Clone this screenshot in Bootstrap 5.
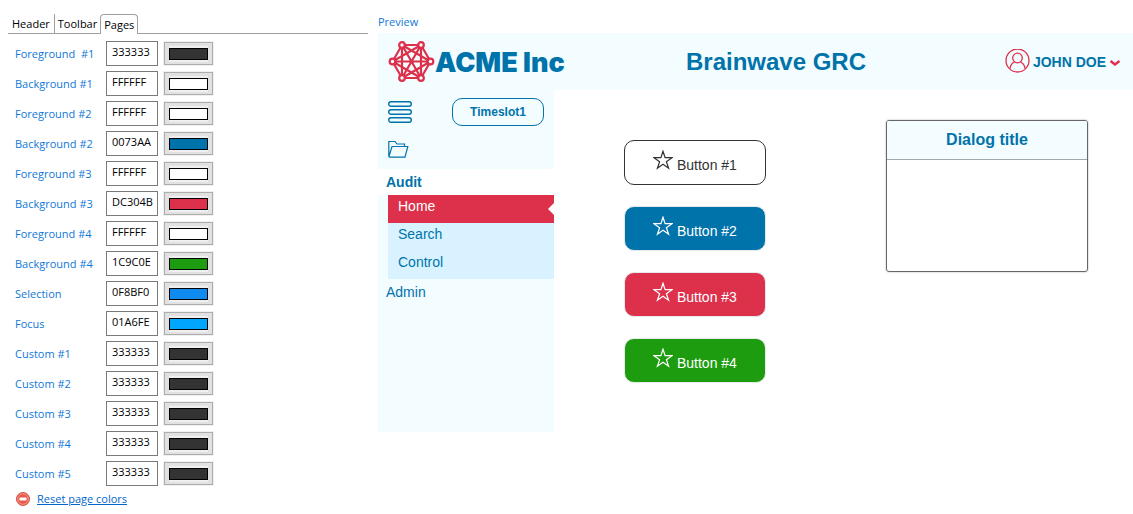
<!DOCTYPE html>
<html lang="en">
<head>
<meta charset="utf-8">
<meta name="viewport" content="width=device-width, initial-scale=1">
<title>Theme colors</title>
<link href="https://cdn.jsdelivr.net/npm/bootstrap@5.3.0/dist/css/bootstrap.min.css" rel="stylesheet">
<style>
  :root { --brand: #0073aa; --accent: #dc304b; --tint: #f3fcff; --label: #0f78d8; }
  body { font-family: "Open Sans", "Noto Sans", sans-serif; font-size: 11px; line-height: 16px; color: #000; background: #fff; }
  .layout { padding: 14px 0 0 8px; gap: 10px; }
  .settings { width: 360px; }
  .page-tabs { border-bottom: 1px solid #a0a0a0; height: 20px; }
  .page-tabs .nav-link { font-size: 11px; line-height: 16px; height: 19px; color: #000; padding: 2px 4px 0; border: 0; border-radius: 0; }
  .page-tabs .nav-item + .nav-item .nav-link { border-left: 1px solid #a0a0a0; padding: 2px 3px 0; }
  .page-tabs .nav-item .nav-link.active { height: 20px; background: #fff; border: 1px solid #a0a0a0; border-bottom: 0; border-radius: 4px 4px 0 0; }
  .color-list { gap: 5px; padding: 7px 0 0 7px; }
  .color-row { height: 25px; }
  .color-row label { width: 91px; color: var(--label); white-space: pre; }
  .hex-box { width: 52px; height: 25px; padding: 0 0 4px 5px; border: 1px solid #7a7a7a; border-radius: 0; font-size: 11px; line-height: 16px; color: #000; background: #fff; }
  .swatch-btn { width: 49px; height: 23px; margin-left: 6px; padding: 0; border: 1px solid #adadad; outline: 1px solid #f0f0f0; background: #e1e1e1; }
  .swatch-btn span { width: 39px; height: 16px; padding: 2px 0; background: #f0f0f0; }
  .swatch-btn i { height: 12px; border: 1px solid #000; }
  .reset-row { padding: 5px 0 0 8px; gap: 7px; }
  .reset-link { color: #0066cc; }
  .preview { font-family: "Liberation Sans", Arial, sans-serif; font-size: 14px; color: var(--brand); }
  .preview-label { font-family: "Open Sans", "Noto Sans", sans-serif; font-size: 11px; line-height: 16px; padding-bottom: 3px; color: var(--label); }
  .app-header { background: var(--tint); height: 57px; }
  .app-logo { flex: 0 0 190px; padding-left: 10px; }
  .app-name { font-family: Inter, "Liberation Sans", sans-serif; font-weight: 900; font-size: 27px; line-height: 32px; padding-top: 2px; }
  .app-title { font-size: 24px; line-height: 32px; font-weight: 700; }
  .app-user { flex: 0 0 149px; padding: 0 12px 0 0; border: 0; background: none; color: var(--brand); font-size: 14px; font-weight: 700; gap: 3px; }
  .side { width: 176px; height: 342px; background: var(--tint); }
  .side-tools { height: 79px; padding: 8px 10px; }
  .icon-btn { padding: 0; border: 0; background: none; display: flex; }
  .timeslot { width: 92px; height: 28px; border: 1px solid var(--brand); border-radius: 10px; background: none; color: var(--brand); font-size: 12px; font-weight: 700; }
  .side a { color: var(--brand); text-decoration: none; display: block; line-height: 16px; }
  .side-top { padding: 5px 8px; height: 26px; }
  .side-top.open { background: #fff; font-weight: 700; }
  .side-sub { margin-left: 10px; background: #d8f3ff; }
  .side-sub a { height: 28px; padding: 3px 10px; position: relative; }
  .side-sub a.current { background: var(--accent); color: #fff; }
  .side-sub a.current::after { content: ""; position: absolute; right: 0; top: 8px; border: 6px solid transparent; border-left: 0; border-right-color: #fff; }
  .demo { padding: 50px 0 0 70px; }
  .demo-buttons { gap: 21px; }
  .demo-btn { width: 142px; height: 45px; padding: 0 6px 3px; border: 1px solid #e6eaec; border-radius: 10px; font-size: 14px; line-height: 16px; color: #fff; }
  .demo-btn svg { vertical-align: baseline; }
  .demo-btn.one { color: #333; background: #fff; border-color: #333; }
  .demo-btn.two { background: #0073aa; }
  .demo-btn.three { background: #dc304b; }
  .demo-btn.four { background: #1c9c0e; }
  .dialog-box { width: 202px; height: 152px; margin: -20px 0 0 120px; border: 1px solid #666; border-radius: 3px; box-shadow: 0 0 2px #aaa; }
  .dialog-box h2 { height: 39px; margin: 0; font-size: 16px; line-height: 38px; font-weight: 700; background: var(--tint); border-bottom: 1px solid #a0a8ab; border-radius: 2px 2px 0 0; }
</style>
</head>
<body>
<svg class="d-none">
  <symbol id="star" viewBox="0 0 20 20"><path d="M10 1.2 12.1 7.7H19L13.4 11.7 15.6 18.3 10 14.3 4.4 18.3 6.6 11.7 1 7.7H7.900Z" fill="none" stroke="currentColor" stroke-width="1.2"/></symbol>
</svg>
<div class="layout d-flex">
  <section class="settings flex-shrink-0">
    <ul class="nav page-tabs flex-nowrap">
      <li class="nav-item"><a class="nav-link" href="#">Header</a></li>
      <li class="nav-item"><a class="nav-link" href="#">Toolbar</a></li>
      <li class="nav-item"><a class="nav-link active" href="#">Pages</a></li>
    </ul>
    <form class="color-list d-flex flex-column" id="colors"></form>
    <div class="reset-row d-flex align-items-center">
      <svg width="14" height="14" viewBox="0 0 14 14" aria-hidden="true"><circle cx="7" cy="7" r="6.5" fill="#e8594a" stroke="#d0584c"/><circle cx="7" cy="7" r="5.300" fill="none" stroke="#f4a99b" stroke-width=".8"/><rect x="3.500" y="5.600" width="7" height="2.800" rx=".6" fill="#fff"/></svg>
      <a class="reset-link" href="#">Reset page colors</a>
    </div>
  </section>

  <section class="preview flex-fill">
    <div class="preview-label">Preview</div>
    <header class="app-header d-flex align-items-center">
      <div class="app-logo d-flex align-items-center">
        <svg width="47" height="41" viewBox="0 0 47 41" fill="none" stroke="#dc304b" stroke-width="2.200" aria-hidden="true">
          <path d="M4.500 20.500 14 4H33L42.500 20.500 33 37H14ZM14 4 33 37M33 4 14 37M4.500 20.500H42.500M14 4 42.500 20.500 14 37ZM33 4 4.500 20.500 33 37Z"/>
          <g fill="#f3fcff"><circle cx="14" cy="4" r="2.800"/><circle cx="33" cy="4" r="2.800"/><circle cx="4.500" cy="20.500" r="2.800"/><circle cx="42.500" cy="20.500" r="2.800"/><circle cx="14" cy="37" r="2.800"/><circle cx="33" cy="37" r="2.800"/></g>
        </svg>
        <span class="app-name text-nowrap">ACME Inc</span>
      </div>
      <div class="app-title flex-fill text-center">Brainwave GRC</div>
      <button class="app-user d-flex align-items-center justify-content-end text-nowrap" type="button">
        <svg width="25" height="25" viewBox="0 0 25 25" fill="none" stroke="#dc304b" stroke-width="1.300" aria-hidden="true"><circle cx="12.500" cy="11.500" r="11.500"/><circle cx="12.500" cy="9" r="4.800"/><path d="M5 19.500C5.500 16 7.500 13.800 9.500 13M20 19.500C19.500 16 17.500 13.800 15.500 13"/></svg>
        <span>JOHN DOE</span>
        <svg width="12" height="8" viewBox="0 0 12 8" fill="none" stroke="#dc304b" stroke-width="2.400" aria-hidden="true"><path d="M1.500 3 6 6.500 10.500 3"/></svg>
      </button>
    </header>
    <div class="d-flex">
      <nav class="side flex-shrink-0">
        <div class="side-tools d-flex flex-column justify-content-between">
          <div class="d-flex justify-content-between align-items-center">
            <button class="icon-btn" type="button" aria-label="Menu"><svg width="24" height="24" viewBox="0 0 24 24" fill="none" stroke="#0073aa" stroke-width="1.400"><rect x=".7" y="1.700" width="22.600" height="4.600" rx="2.300"/><rect x=".7" y="9.700" width="22.600" height="4.600" rx="2.300"/><rect x=".7" y="17.700" width="22.600" height="4.600" rx="2.300"/></svg></button>
            <button class="timeslot" type="button">Timeslot1</button>
          </div>
          <button class="icon-btn" type="button" aria-label="Open folder"><svg width="21" height="22" viewBox="0 0 21 22" fill="none" stroke="#0073aa" stroke-width="1.200"><path d="M.8 17.500V2.500H7L9 5H16.500V7.500M.8 18 4 7.500H19.800L17 18.200H.8"/></svg></button>
        </div>
        <a class="side-top open" href="#">Audit</a>
        <div class="side-sub">
          <a class="current" href="#">Home</a>
          <a href="#">Search</a>
          <a href="#">Control</a>
        </div>
        <a class="side-top" href="#">Admin</a>
      </nav>
      <main class="demo d-flex align-items-start">
        <div class="demo-buttons d-flex flex-column">
          <button class="demo-btn one" type="button"><svg width="20" height="20" aria-hidden="true"><use href="#star"/></svg> Button #1</button>
          <button class="demo-btn two" type="button"><svg width="20" height="20" aria-hidden="true"><use href="#star"/></svg> Button #2</button>
          <button class="demo-btn three" type="button"><svg width="20" height="20" aria-hidden="true"><use href="#star"/></svg> Button #3</button>
          <button class="demo-btn four" type="button"><svg width="20" height="20" aria-hidden="true"><use href="#star"/></svg> Button #4</button>
        </div>
        <div class="dialog-box"><h2 class="text-center">Dialog title</h2></div>
      </main>
    </div>
  </section>
</div>
<script src="https://cdn.jsdelivr.net/npm/bootstrap@5.3.0/dist/js/bootstrap.bundle.min.js"></script>
<script>
  const colors = [
    ["Foreground  #1", "333333"], ["Background #1", "FFFFFF"], ["Foreground #2", "FFFFFF"],
    ["Background #2", "0073AA"], ["Foreground #3", "FFFFFF"], ["Background #3", "DC304B"],
    ["Foreground #4", "FFFFFF"], ["Background #4", "1C9C0E"], ["Selection", "0F8BF0"],
    ["Focus", "01A6FE"], ["Custom #1", "333333"], ["Custom #2", "333333"],
    ["Custom #3", "333333"], ["Custom #4", "333333"], ["Custom #5", "333333"]
  ];
  document.getElementById("colors").innerHTML = colors.map(([name, hex], i) => `
    <div class="color-row d-flex align-items-center">
      <label for="c${i}">${name}</label>
      <input class="hex-box" id="c${i}" type="text" value="${hex}">
      <button class="swatch-btn d-flex align-items-center justify-content-center" type="button" aria-label="Pick ${name}"><span class="d-block"><i class="d-block" style="background:#${hex}"></i></span></button>
    </div>`).join("");
</script>
</body>
</html>
